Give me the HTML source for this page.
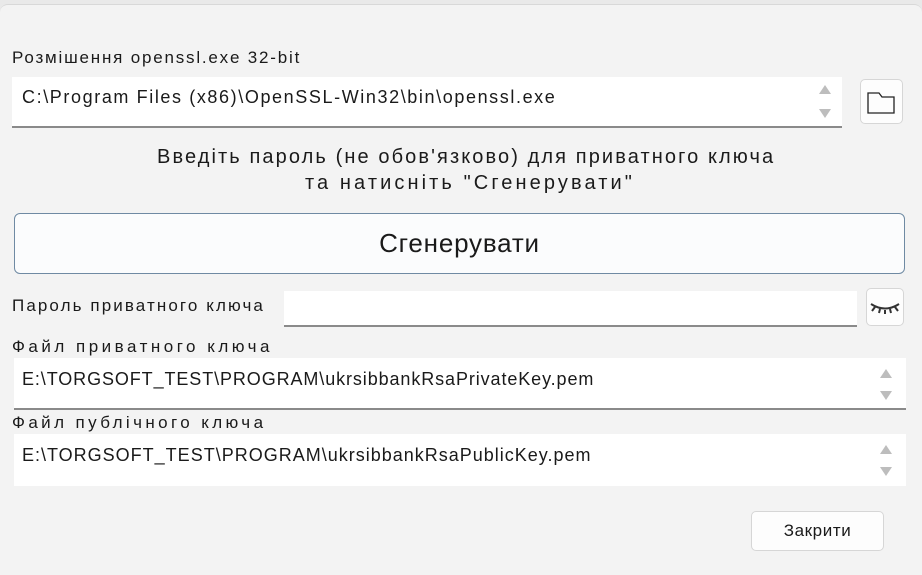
<!DOCTYPE html>
<html><head><meta charset="utf-8"><style>
body{margin:0;width:922px;height:566px;background:#e9e9e9;position:relative;overflow:hidden;font-family:"Liberation Sans","DejaVu Sans",sans-serif;color:#1a1a1a}
.win{position:absolute;left:0;top:4px;width:922px;height:570px;background:#f3f3f3;border-top:1px solid #d8d8d8;border-radius:8px 8px 0 0}
.a{position:absolute;white-space:nowrap}
.lbl{font-size:17px}
.inp{position:absolute;background:#fff;border-bottom:2px solid #8a8a8a;box-sizing:border-box}
.inp span{position:absolute;left:10px;font-size:18px;white-space:nowrap}
.arr{position:absolute;width:0;height:0;border-left:6px solid transparent;border-right:6px solid transparent}
.up{border-bottom:9px solid #bdbdbd}.dn{border-top:9px solid #bdbdbd}
.btn{position:absolute;background:#fdfdfd;border:1px solid #d6d6d6;border-radius:5px;box-sizing:border-box}
</style></head><body>
<div class="win">
<div class="a lbl" style="left:12px;top:43px;letter-spacing:1.8px">Розмішення openssl.exe 32-bit</div>
<div class="inp" style="left:12px;top:72px;width:830px;height:51px"><span style="top:10px;letter-spacing:1.6px">C:\Program Files (x86)\OpenSSL-Win32\bin\openssl.exe</span>
<div class="arr up" style="left:807px;top:8px"></div><div class="arr dn" style="left:807px;top:32px"></div></div>
<div class="btn" style="left:860px;top:74px;width:43px;height:45px">
<svg width="43" height="45" style="position:absolute;left:-1px;top:-1px"><path d="M8 14 H19 L22 18 H34 V34 H8 Z" fill="none" stroke="#222" stroke-width="1.3"/></svg></div>
<div class="a" style="left:157px;top:141px;font-size:20px;letter-spacing:2.1px">Введіть пароль (не обов'язково) для приватного ключа</div>
<div class="a" style="left:305px;top:167px;font-size:20px;letter-spacing:3.1px">та натисніть "Сгенерувати"</div>
<div class="a" style="left:14px;top:208px;width:891px;height:61px;box-sizing:border-box;border:1.5px solid #6f8aa3;border-radius:6px;background:#fbfcfd;text-align:center;line-height:58px;font-size:26px;letter-spacing:0.8px">Сгенерувати</div>
<div class="a lbl" style="left:12px;top:291px;letter-spacing:2.1px">Пароль приватного ключа</div>
<div class="inp" style="left:284px;top:286px;width:573px;height:36px"></div>
<div class="btn" style="left:866px;top:283px;width:38px;height:38px">
<svg width="38" height="38" style="position:absolute;left:-1px;top:-1px"><path d="M5 16 Q19 25 33 16 M9 19 L6 23 M14 21 L13 25 M19 22 V26 M24 21 L25 25 M29 19 L32 23" fill="none" stroke="#333" stroke-width="2"/></svg></div>
<div class="a lbl" style="left:12px;top:332px;letter-spacing:3.5px">Файл приватного ключа</div>
<div class="inp" style="left:14px;top:353px;width:892px;height:52px"><span style="top:11px;left:8px;letter-spacing:0.9px">E:\TORGSOFT_TEST\PROGRAM\ukrsibbankRsaPrivateKey.pem</span>
<div class="arr up" style="left:866px;top:11px"></div><div class="arr dn" style="left:866px;top:33px"></div></div>
<div class="a lbl" style="left:12px;top:408px;letter-spacing:3.4px">Файл публічного ключа</div>
<div class="inp" style="left:14px;top:429px;width:892px;height:52px;border-bottom:none"><span style="top:11px;left:8px;letter-spacing:1px">E:\TORGSOFT_TEST\PROGRAM\ukrsibbankRsaPublicKey.pem</span>
<div class="arr up" style="left:866px;top:11px"></div><div class="arr dn" style="left:866px;top:33px"></div></div>
<div class="btn" style="left:751px;top:506px;width:133px;height:40px;text-align:center;line-height:38px;font-size:17px;letter-spacing:0.6px">Закрити</div>
</div>
</body></html>
